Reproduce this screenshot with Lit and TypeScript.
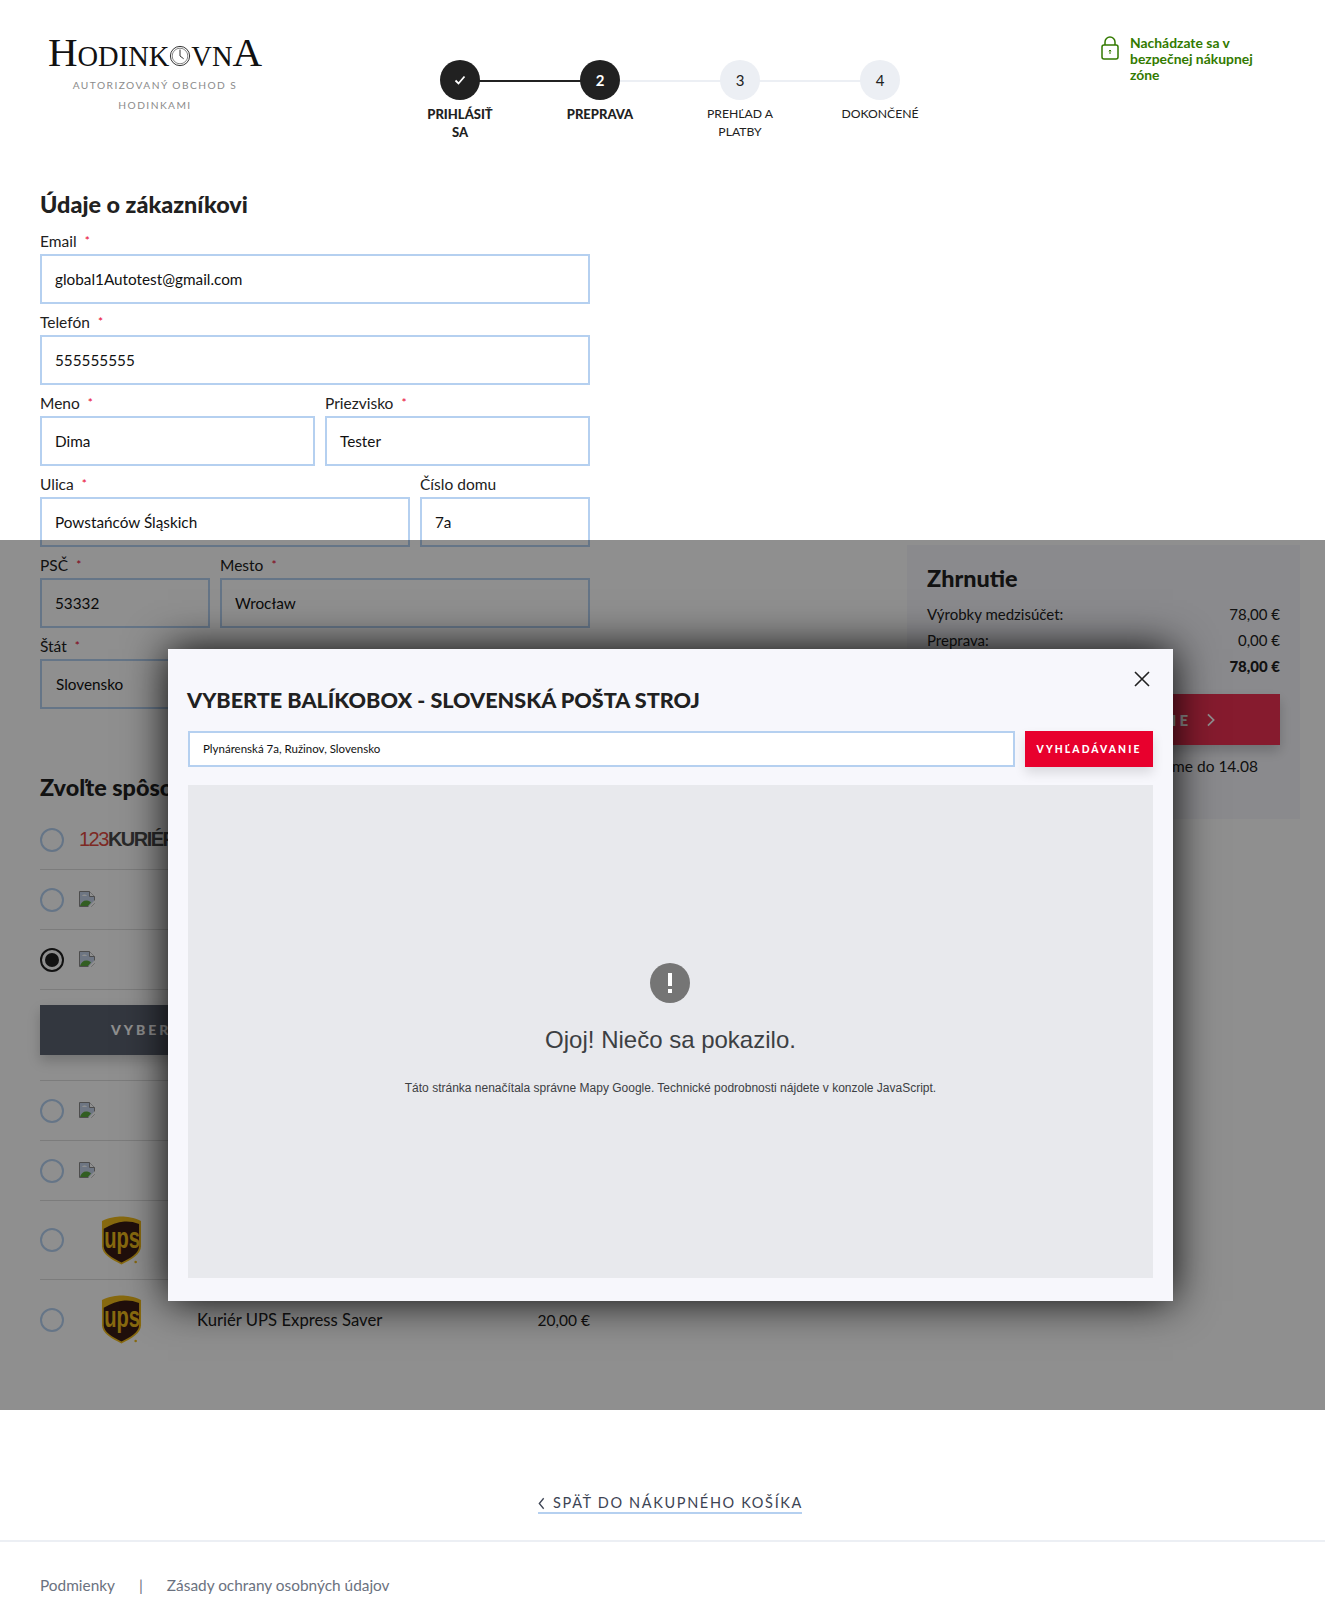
import { css, html, LitElement, nothing } from "lit";
import { customElement } from "lit/decorators.js";

const steps = [
  { mark: "check", label: "Prihlásiť sa", done: true },
  { mark: "2", label: "Preprava", done: true },
  { mark: "3", label: "Prehľad a platby", done: false },
  { mark: "4", label: "Dokončené", done: false },
];

const brokenImage = html`<svg viewBox="0 0 16 16" width="16" height="16">
  <path d="M.5.5h10l5 5v7l-3 3H.5z" fill="#c4d3ea" stroke="#8a8a8a" />
  <path d="M10.500.5v5h5" fill="#fff" stroke="#8a8a8a" />
  <path d="M1 15c1-4 4-6 7-5.500 2 .3 3 1 4 2l-3 3.500z" fill="#5aa83e" />
  <path d="M3 5c1-2 4-2 5 0z" fill="#fff" />
  <path d="M9 16l7-7v3l-4 4z" fill="#fff" />
</svg>`;

const upsLogo = html`<svg viewBox="0 0 42 50" width="41" height="49">
  <path d="M1 5C8 1.500 16 .5 21 .5S34 1.500 41 5v26c0 8-10 14-20 18.500C11 45 1 39 1 31z" fill="#f0bc1c" />
  <path d="M2.800 13C10 8.500 17 6 24 5.500c5-.3 10 .5 15 2.500v23c0 7-8.500 12-18 16.500C11.500 43 2.800 38 2.800 31z" fill="#3a1c14" />
  <text class="ups-word" text-anchor="middle" transform="translate(21.500 33) scale(.98 1.45)">ups</text>
  <circle cx="35.500" cy="47" r="1.300" fill="#f0bc1c" />
</svg>`;

const carriers = [
  { logo: html`<span class="kurier"><b>123</b>KURIÉR</span>`, kind: "plain" },
  { logo: brokenImage, kind: "plain" },
  { logo: brokenImage, kind: "plain", selected: true },
  { logo: brokenImage, kind: "plain" },
  { logo: brokenImage, kind: "plain" },
  { logo: upsLogo, kind: "tall" },
  { logo: upsLogo, kind: "tall", name: "Kuriér UPS Express Saver", price: "20,00 €" },
];

@customElement("app-root")
export class AppRoot extends LitElement {
  static override styles = css`
    :host {
      display: block;
      position: relative;
      background: #fff;
      color: #212121;
      font-family: "Lato", "Noto Sans", sans-serif;
      font-size: 16px;
      line-height: 24px;
    }

    * {
      box-sizing: border-box;
    }

    .header {
      display: flex;
      height: 189px;
      padding: 0 40px;
    }

    .brand {
      width: 230px;
      padding-top: 30px;
      text-align: center;
    }

    .wordmark {
      display: flex;
      align-items: baseline;
      justify-content: center;
      height: 44px;
      font-family: "Liberation Serif", serif;
      font-size: 28.500px;
      line-height: 44px;
      color: #111;
    }

    .wordmark .big {
      font-size: 41px;
    }

    .wordmark svg {
      align-self: center;
      margin-top: 7px;
    }

    .tagline {
      margin: 1px auto 0;
      width: 180px;
      font-size: 10.200px;
      line-height: 20px;
      letter-spacing: 1.450px;
      color: #8b8b8b;
    }

    .stepper {
      display: flex;
      width: 560px;
      margin: 60px 0 0 120px;
    }

    .step {
      position: relative;
      width: 140px;
      display: flex;
      flex-direction: column;
      align-items: center;
    }

    .step:not(:last-child)::after {
      content: "";
      position: absolute;
      top: 20px;
      left: 70px;
      width: 140px;
      height: 2px;
      background: #eceff4;
    }

    .step.done.linked::after {
      background: #212121;
    }

    .dot {
      position: relative;
      z-index: 1;
      display: flex;
      align-items: center;
      justify-content: center;
      width: 40px;
      height: 40px;
      border-radius: 50%;
      background: #eceff4;
      font-size: 15px;
    }

    .step.done .dot {
      background: #212121;
      color: #fff;
      font-weight: 700;
    }

    .step-label {
      width: 84px;
      margin-top: 5px;
      font-size: 12.200px;
      line-height: 18px;
      text-align: center;
      text-transform: uppercase;
    }

    .step.done .step-label {
      font-size: 13px;
      font-weight: 900;
    }

    .secure {
      display: flex;
      gap: 11px;
      width: 170px;
      margin: 35px 0 0 151px;
      font-size: 13.900px;
      font-weight: 700;
      line-height: 16px;
      color: #337a00;
    }

    .secure svg {
      flex: none;
      margin-top: 1px;
    }

    .main {
      display: grid;
      grid-template-columns: 550px 393px;
      justify-content: space-between;
      padding: 0 25px 46px 40px;
    }

    h2 {
      margin: 0;
      font-size: 23.400px;
      font-weight: 900;
      line-height: 30px;
    }

    .row {
      display: flex;
      gap: 10px;
    }

    .field {
      flex: 1;
      min-width: 0;
      margin-bottom: 6px;
    }

    .field.w170 {
      flex: 0 0 170px;
    }

    .field.w275 {
      flex: 0 0 275px;
    }

    .field.sel .input {
      padding-left: 14px;
    }

    .field label {
      display: block;
      height: 24px;
      margin-bottom: 1px;
      font-size: 15.500px;
    }

    .field .req {
      margin-left: 5px;
      font-size: 12px;
      color: #e8002d;
      vertical-align: 2px;
    }

    .input {
      display: flex;
      align-items: center;
      height: 50px;
      padding: 0 13px;
      border: 2px solid #b5d0f0;
      background: #fff;
      font-size: 15.300px;
      color: #111;
    }

    .field-block {
      margin-top: 10px;
    }

    .shipping {
      margin-top: 63px;
    }

    .carriers {
      margin-top: 8px;
    }

    .carrier {
      display: flex;
      align-items: center;
      height: 60px;
      border-bottom: 1px solid #dedede;
    }

    .carrier.tall {
      height: 79px;
    }

    .carrier:last-child {
      border-bottom: 0;
    }

    .radio {
      flex: none;
      display: flex;
      align-items: center;
      justify-content: center;
      width: 24px;
      height: 24px;
      border: 2px solid #b5d0f0;
      border-radius: 50%;
    }

    .radio.on {
      border-color: #212121;
    }

    .radio.on::after {
      content: "";
      width: 14px;
      height: 14px;
      border-radius: 50%;
      background: #212121;
    }

    .logo {
      flex: none;
      width: 118px;
      margin: 0 0 1px 15px;
    }

    .carrier.tall .logo {
      padding-left: 22px;
      margin-bottom: 0;
    }

    .logo svg {
      display: block;
    }

    .kurier {
      font-family: "Liberation Sans", sans-serif;
      font-size: 20px;
      font-weight: 700;
      letter-spacing: -1.500px;
      color: #4a4a4a;
      white-space: nowrap;
    }

    .kurier b {
      font-weight: 400;
      color: #e04a3f;
    }

    .ups-word {
      font-family: "Liberation Sans", sans-serif;
      font-size: 21px;
      font-weight: 700;
      fill: #f0bc1c;
    }

    .carrier-name {
      flex: 1;
      font-size: 16.700px;
    }

    .carrier-price {
      font-size: 15.500px;
    }

    .pick {
      padding: 15px 0 25px;
      border-bottom: 1px solid #dedede;
    }

    .pick div {
      height: 50px;
      padding-left: 71px;
      background: #5c6370;
      box-shadow: 0 6px 12px rgba(0, 0, 0, 0.2);
      color: #fff;
      font-size: 14px;
      font-weight: 900;
      line-height: 50px;
      letter-spacing: 3px;
    }

    .summary {
      align-self: start;
      height: 274px;
      margin-top: 356px;
      padding: 18px 20px 0;
      background: #f7f7fc;
    }

    .sum-row {
      display: flex;
      justify-content: space-between;
      height: 26px;
      font-size: 15px;
      line-height: 26px;
    }

    .summary h2 {
      margin-bottom: 8px;
    }

    .sum-row.total {
      font-weight: 900;
    }

    .continue {
      display: flex;
      align-items: center;
      justify-content: flex-end;
      gap: 15px;
      height: 51px;
      margin-top: 15px;
      padding-right: 64px;
      background: #ef3052;
      box-shadow: 0 6px 12px rgba(0, 0, 0, 0.2);
      color: #fff;
      font-size: 15px;
      font-weight: 900;
      letter-spacing: 3px;
    }

    .delivery {
      margin-top: 9px;
      padding-right: 22px;
      text-align: right;
      font-size: 15.500px;
    }

    .overlay {
      position: absolute;
      top: 540px;
      left: 0;
      right: 0;
      height: 870px;
      background: rgba(0, 0, 0, 0.44);
    }

    .modal {
      position: absolute;
      top: 109px;
      left: 168px;
      width: 1005px;
      height: 652px;
      padding: 36px 20px 23px;
      background: #f7f7fc;
      box-shadow: 0 0 40px rgba(0, 0, 0, 0.95);
      display: flex;
      flex-direction: column;
    }

    .close {
      position: absolute;
      top: 22px;
      right: 23px;
      display: block;
    }

    .modal h3 {
      margin: 0 0 0 -1px;
      font-size: 21.600px;
      font-weight: 900;
      line-height: 30px;
      text-transform: uppercase;
    }

    .search {
      display: flex;
      gap: 10px;
      margin-top: 16px;
    }

    .search .input {
      flex: 1;
      height: 36px;
      font-size: 11.500px;
    }

    .search button {
      width: 128px;
      height: 36px;
      padding: 0;
      border: 0;
      background: #e8002d;
      box-shadow: 0 6px 12px rgba(0, 0, 0, 0.12);
      color: #fff;
      font-family: inherit;
      font-size: 10.300px;
      font-weight: 900;
      letter-spacing: 2.100px;
    }

    .map {
      flex: 1;
      margin-top: 18px;
      padding-top: 178px;
      background: #e8e9ed;
      color: #3c4043;
      font-family: "Liberation Sans", sans-serif;
      text-align: center;
    }

    .map svg {
      display: block;
      margin: 0 auto;
      transform: translateX(-1px);
    }

    .map .oops {
      margin-top: 22px;
      font-size: 24px;
      line-height: 30px;
    }

    .map .detail {
      margin-top: 24px;
      font-size: 12px;
      line-height: 18px;
    }

    .back {
      display: flex;
      justify-content: center;
      margin-top: 89px;
      padding-left: 15px;
    }

    .back span {
      display: flex;
      align-items: center;
      gap: 8px;
      width: 264px;
      height: 20px;
      border-bottom: 2px solid #b5d0f0;
      color: #3d4454;
      font-size: 14.500px;
      letter-spacing: 1.650px;
      white-space: nowrap;
    }

    .back svg {
      flex: none;
    }

    .footer {
      display: flex;
      gap: 24px;
      height: 79px;
      margin-top: 26px;
      padding: 31px 40px 0;
      border-top: 2px solid #eceff4;
      color: #6b7280;
      font-size: 15.400px;
    }
  `;

  private _step(s: (typeof steps)[number], i: number) {
    // the line out of a step only goes dark once the next step is reached
    const linked = s.done && steps[i + 1]?.done;
    return html`<div class="step ${s.done ? "done" : ""} ${linked ? "linked" : ""}">
      <div class="dot">
        ${s.mark === "check"
          ? html`<svg viewBox="0 0 12 12" width="12" height="12">
              <path d="M1.500 6.500l3 3 6-7" fill="none" stroke="#fff" stroke-width="1.800" />
            </svg>`
          : s.mark}
      </div>
      <div class="step-label">${s.label}</div>
    </div>`;
  }

  private _field(label: string, value: string, required = true, cls = "") {
    return html`<div class="field ${cls}">
      <label>${label}${required ? html`<span class="req"> *</span>` : nothing}</label>
      <div class="input">${value}</div>
    </div>`;
  }

  private _carrier(c: (typeof carriers)[number]) {
    return html`<div class="carrier ${c.kind === "tall" ? "tall" : ""}">
      <span class="radio ${c.selected ? "on" : ""}"></span>
      <div class="logo">${c.logo}</div>
      <div class="carrier-name">${c.name ?? ""}</div>
      <div class="carrier-price">${c.price ?? ""}</div>
    </div>`;
  }

  override render() {
    return html`
      <header class="header">
        <div class="brand">
          <div class="wordmark">
            <span class="big">H</span>ODINK<svg viewBox="0 0 24 24" width="22" height="22">
              <circle cx="12" cy="12" r="10.500" fill="none" stroke="#222" stroke-width="1" />
              <circle cx="12" cy="12" r="8.500" fill="none" stroke="#222" stroke-width="0.600" />
              <path d="M12 5v7l4 3" fill="none" stroke="#222" stroke-width="1" />
            </svg>VN<span class="big">A</span>
          </div>
          <div class="tagline">AUTORIZOVANÝ OBCHOD S HODINKAMI</div>
        </div>
        <div class="stepper">${steps.map((s, i) => this._step(s, i))}</div>
        <div class="secure">
          <svg viewBox="0 0 18 24" width="18" height="24" fill="none" stroke="#337a00" stroke-width="1.500">
            <path d="M4 9V6a5 5 0 0 1 10 0v3" />
            <rect x="1" y="9" width="16" height="14" rx="2" />
            <path d="M9 14v4M7.800 15.200L9 14l1.200 1.200" stroke-width="1" />
          </svg>
          <span>Nachádzate sa v bezpečnej nákupnej zóne</span>
        </div>
      </header>

      <main class="main">
        <section>
          <h2>Údaje o zákazníkovi</h2>
          <div class="field-block">
            ${this._field("Email", "global1Autotest@gmail.com")}
            ${this._field("Telefón", "555555555")}
            <div class="row">
              ${this._field("Meno", "Dima", true, "w275")}
              ${this._field("Priezvisko", "Tester")}
            </div>
            <div class="row">
              ${this._field("Ulica", "Powstańców Śląskich")}
              ${this._field("Číslo domu", "7a", false, "w170")}
            </div>
            <div class="row">
              ${this._field("PSČ", "53332", true, "w170")}
              ${this._field("Mesto", "Wrocław")}
            </div>
            ${this._field("Štát", "Slovensko", true, "sel")}
          </div>
          <div class="shipping">
            <h2>Zvoľte spôsob dopravy</h2>
            <div class="carriers">
              ${carriers.slice(0, 3).map((c) => this._carrier(c))}
              <div class="pick"><div>VYBERTE BALÍKOBOX</div></div>
              ${carriers.slice(3).map((c) => this._carrier(c))}
            </div>
          </div>
        </section>
        <aside class="summary">
          <h2>Zhrnutie</h2>
          <div class="sum-row"><span>Výrobky medzisúčet:</span><span>78,00 €</span></div>
          <div class="sum-row"><span>Preprava:</span><span>0,00 €</span></div>
          <div class="sum-row total"><span>Spolu:</span><span>78,00 €</span></div>
          <div class="continue">
            <span>POKRAČOVANIE</span>
            <svg viewBox="0 0 10 16" width="10" height="14" fill="none" stroke="#fff" stroke-width="2">
              <path d="M1.500 1.500L8 8l-6.500 6.500" />
            </svg>
          </div>
          <div class="delivery">Doručíme do 14.08</div>
        </aside>
      </main>

      <div class="back">
        <span>
          <svg viewBox="0 0 8 14" width="7" height="13" fill="none" stroke="#3d4454" stroke-width="1.500">
            <path d="M6.500 1L1.500 7l5 6" />
          </svg>
          SPÄŤ DO NÁKUPNÉHO KOŠÍKA
        </span>
      </div>

      <footer class="footer">
        <span>Podmienky</span>
        <span>|</span>
        <span>Zásady ochrany osobných údajov</span>
      </footer>

      <div class="overlay">
        <div class="modal">
          <svg class="close" viewBox="0 0 16 16" width="16" height="16" fill="none" stroke="#212121" stroke-width="1.600">
            <path d="M1 1l14 14M15 1L1 15" />
          </svg>
          <h3>Vyberte Balíkobox - Slovenská pošta stroj</h3>
          <div class="search">
            <div class="input">Plynárenská 7a, Ružinov, Slovensko</div>
            <button>VYHĽADÁVANIE</button>
          </div>
          <div class="map">
            <svg viewBox="0 0 40 40" width="40" height="40">
              <circle cx="20" cy="20" r="20" fill="#757575" />
              <rect x="18" y="10" width="4" height="13" fill="#fff" />
              <rect x="18" y="26" width="4" height="4" fill="#fff" />
            </svg>
            <div class="oops">Ojoj! Niečo sa pokazilo.</div>
            <div class="detail">
              Táto stránka nenačítala správne Mapy Google. Technické podrobnosti nájdete v konzole JavaScript.
            </div>
          </div>
        </div>
      </div>
    `;
  }
}
